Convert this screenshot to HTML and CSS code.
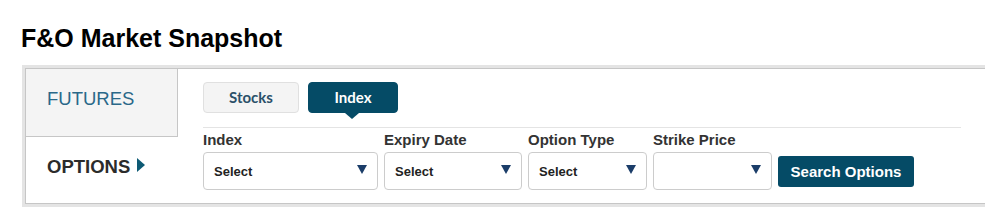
FILE: index.html
```html
<!DOCTYPE html>
<html>
<head>
<meta charset="utf-8">
<title>F&amp;O Market Snapshot</title>
<link rel="stylesheet" href="styles.css">
</head>
<body>
<div class="page">
  <h1 class="title">F&amp;O Market Snapshot</h1>
  <div class="panel">
    <div class="panel-inner">
      <div class="side-tabs">
        <div class="side-tab futures">FUTURES</div>
        <div class="side-tab options">OPTIONS<span class="tri-right"></span></div>
      </div>
      <div class="content">
        <div class="seg">
          <div class="seg-btn stocks">Stocks</div>
          <div class="seg-btn active">Index</div>
        </div>
        <div class="divider"></div>
        <div class="form-row">
          <div class="field f-index">
            <div class="label">Index</div>
            <div class="select"><span>Select</span><span class="caret"></span></div>
          </div>
          <div class="field f-expiry">
            <div class="label">Expiry Date</div>
            <div class="select"><span>Select</span><span class="caret"></span></div>
          </div>
          <div class="field f-type">
            <div class="label">Option Type</div>
            <div class="select"><span>Select</span><span class="caret"></span></div>
          </div>
          <div class="field f-strike">
            <div class="label">Strike Price</div>
            <div class="select"><span></span><span class="caret"></span></div>
          </div>
          <div class="search-btn">Search Options</div>
        </div>
      </div>
    </div>
  </div>
</div>
</body>
</html>
```

FILE: styles.css
```css
html, body {
  margin: 0;
  padding: 0;
  background: #ffffff;
  overflow: hidden;
}

.page {
  padding-left: 22px;
  font-family: "Liberation Sans", Arial, sans-serif;
}

.title {
  margin: 24px 0 12px -1px;
  font-size: 25px;
  line-height: 29px;
  font-weight: bold;
  color: #000;
}

.panel {
  width: 990px;
  border: 3px solid #e4e4e4;
  box-sizing: border-box;
}

.panel-inner {
  display: flex;
  border: 1px solid #c6c6c6;
  border-right: none;
}

.side-tabs {
  width: 152px;
  flex: none;
  display: flex;
  flex-direction: column;
}

.side-tab {
  box-sizing: border-box;
  padding: 19px 0 0 21px;
  font-size: 18.5px;
  line-height: 22px;
}

.futures {
  height: 68px;
  background: #f4f4f4;
  color: #2a6889;
  border-right: 1px solid #c6c6c6;
  border-bottom: 1px solid #c6c6c6;
}

.options {
  height: 66px;
  font-weight: bold;
  color: #2b2b2b;
  display: flex;
  align-items: flex-start;
}

.tri-right {
  display: block;
  width: 0;
  height: 0;
  margin: 2px 0 0 7px;
  border-top: 7.5px solid transparent;
  border-bottom: 7.5px solid transparent;
  border-left: 8px solid #0d5a74;
}

.content {
  padding: 13px 0 0 25px;
}

.seg {
  display: flex;
  gap: 9px;
}

.seg-btn {
  position: relative;
  box-sizing: border-box;
  height: 31px;
  border: 1px solid #e0e0e0;
  border-radius: 4px;
  background: #f4f4f4;
  font-family: Lato, "Liberation Sans", sans-serif;
  font-weight: bold;
  font-size: 15px;
  line-height: 29px;
  text-align: center;
  color: #2b5069;
}

.seg-btn.stocks {
  width: 96px;
}

.seg-btn.active {
  width: 90px;
  background: #054b66;
  border-color: #054b66;
  color: #ffffff;
}

.seg-btn.active::after {
  content: "";
  position: absolute;
  left: 50%;
  bottom: -7px;
  margin-left: -8px;
  width: 0;
  height: 0;
  border-left: 7px solid transparent;
  border-right: 7px solid transparent;
  border-top: 6px solid #054b66;
}

.divider {
  width: 758px;
  height: 1px;
  margin-top: 14px;
  background: #e4e4e4;
}

.form-row {
  display: flex;
  gap: 6px;
  margin-top: 3px;
}

.field {
  display: flex;
  flex-direction: column;
  gap: 4px;
}

.label {
  font-size: 15px;
  line-height: 17px;
  font-weight: bold;
  color: #333333;
}

.select {
  box-sizing: border-box;
  height: 38px;
  padding: 0 10px;
  border: 1px solid #cccccc;
  border-radius: 4px;
  display: flex;
  align-items: center;
  justify-content: space-between;
  font-size: 13px;
  font-weight: bold;
  color: #222222;
  background: #fff;
}

.f-index .select { width: 175px; }
.f-expiry .select { width: 138px; }
.f-type .select { width: 119px; }
.f-strike .select { width: 119px; }

.caret {
  display: block;
  width: 0;
  height: 0;
  margin-top: -4px;
  border-left: 5px solid transparent;
  border-right: 5px solid transparent;
  border-top: 9px solid #1b3d69;
}

.search-btn {
  align-self: flex-end;
  margin-bottom: 3px;
  box-sizing: border-box;
  width: 136px;
  height: 31px;
  border-radius: 3px;
  background: #054b66;
  color: #ffffff;
  font-size: 15px;
  font-weight: bold;
  line-height: 31px;
  text-align: center;
}
```
